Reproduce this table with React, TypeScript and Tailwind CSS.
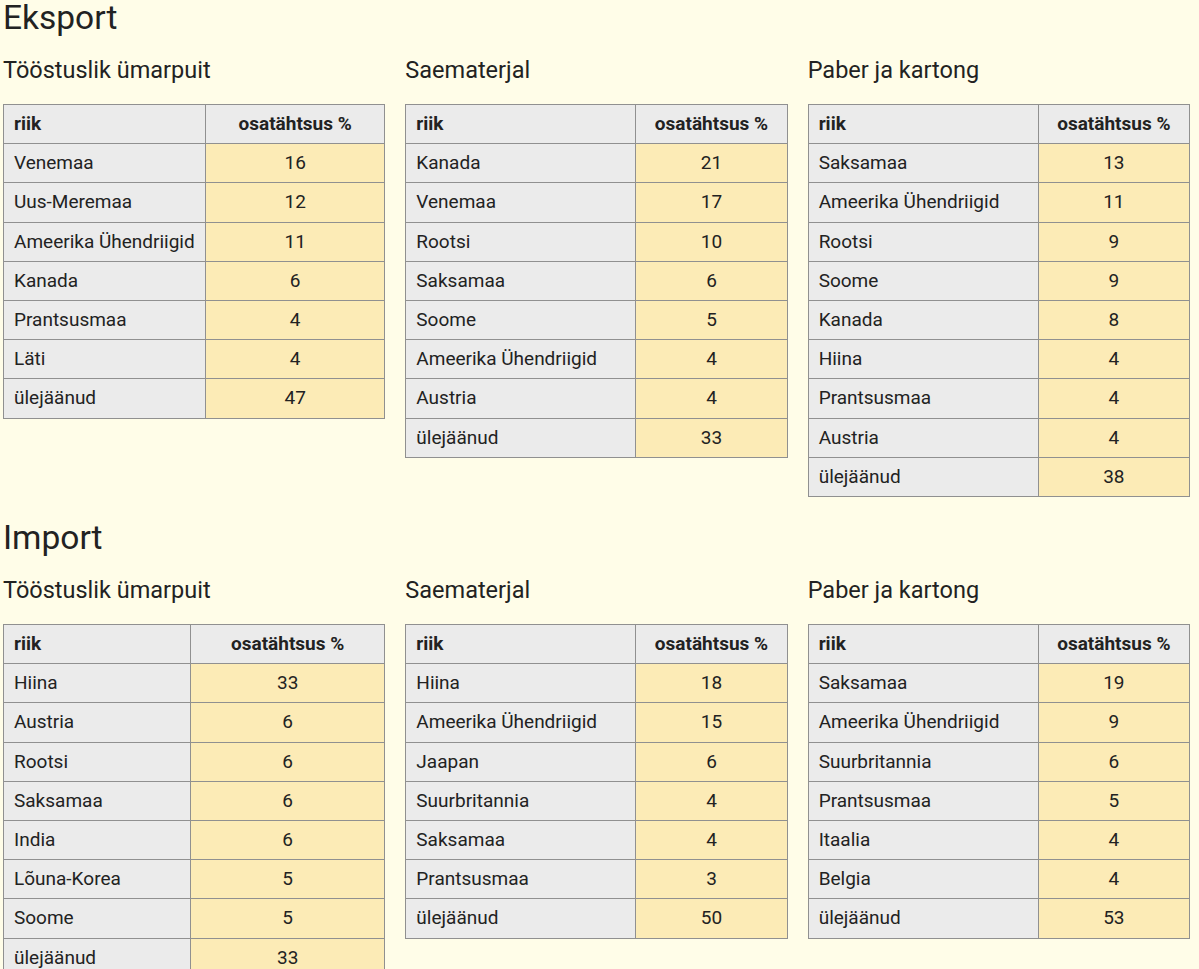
import React from "react";

type Row = [string, number];
type T = { title: string; first: number; rows: Row[] };

const eksport: T[] = [
  {
    title: "Tööstuslik ümarpuit",
    first: 202,
    rows: [
      ["Venemaa", 16],
      ["Uus-Meremaa", 12],
      ["Ameerika Ühendriigid", 11],
      ["Kanada", 6],
      ["Prantsusmaa", 4],
      ["Läti", 4],
      ["ülejäänud", 47],
    ],
  },
  {
    title: "Saematerjal",
    first: 230,
    rows: [
      ["Kanada", 21],
      ["Venemaa", 17],
      ["Rootsi", 10],
      ["Saksamaa", 6],
      ["Soome", 5],
      ["Ameerika Ühendriigid", 4],
      ["Austria", 4],
      ["ülejäänud", 33],
    ],
  },
  {
    title: "Paber ja kartong",
    first: 230,
    rows: [
      ["Saksamaa", 13],
      ["Ameerika Ühendriigid", 11],
      ["Rootsi", 9],
      ["Soome", 9],
      ["Kanada", 8],
      ["Hiina", 4],
      ["Prantsusmaa", 4],
      ["Austria", 4],
      ["ülejäänud", 38],
    ],
  },
];

const importData: T[] = [
  {
    title: "Tööstuslik ümarpuit",
    first: 187,
    rows: [
      ["Hiina", 33],
      ["Austria", 6],
      ["Rootsi", 6],
      ["Saksamaa", 6],
      ["India", 6],
      ["Lõuna-Korea", 5],
      ["Soome", 5],
      ["ülejäänud", 33],
    ],
  },
  {
    title: "Saematerjal",
    first: 230,
    rows: [
      ["Hiina", 18],
      ["Ameerika Ühendriigid", 15],
      ["Jaapan", 6],
      ["Suurbritannia", 4],
      ["Saksamaa", 4],
      ["Prantsusmaa", 3],
      ["ülejäänud", 50],
    ],
  },
  {
    title: "Paber ja kartong",
    first: 230,
    rows: [
      ["Saksamaa", 19],
      ["Ameerika Ühendriigid", 9],
      ["Suurbritannia", 6],
      ["Prantsusmaa", 5],
      ["Itaalia", 4],
      ["Belgia", 4],
      ["ülejäänud", 53],
    ],
  },
];

function Table({ t }: { t: T }) {
  return (
    <div>
      <h2 className="m-0 text-[23.5px] leading-[28px] font-normal text-[#222]">{t.title}</h2>
      <table className="mt-[20px] w-full border-collapse text-[19px] leading-[24.2px] text-[#222]">
        <colgroup>
          <col style={{ width: t.first }} />
          <col />
        </colgroup>
        <thead>
          <tr>
            <th className="border border-[#909090] bg-[#ebebeb] py-[7px] pl-[10px] text-left font-bold">riik</th>
            <th className="border border-[#909090] bg-[#ebebeb] py-[7px] text-center font-bold">osatähtsus %</th>
          </tr>
        </thead>
        <tbody>
          {t.rows.map(([c, v], i) => (
            <tr key={i}>
              <td className="border border-[#909090] bg-[#ebebeb] py-[7px] pl-[10px] text-left">{c}</td>
              <td className="border border-[#909090] bg-[#fcebb6] py-[7px] text-center">{v}</td>
            </tr>
          ))}
        </tbody>
      </table>
    </div>
  );
}

function Section({ title, data, className }: { title: string; data: T[]; className?: string }) {
  return (
    <section className={className}>
      <h1 className="m-0 text-[33.5px] leading-[36px] font-normal text-[#222]">{title}</h1>
      <div className="mt-[20px] grid grid-cols-3 items-start gap-x-[20px]">
        {data.map((t, i) => (
          <Table key={i} t={t} />
        ))}
      </div>
    </section>
  );
}

export default function App() {
  return (
    <div
      className="min-h-[969px] bg-[#fffde8] pl-[3px]"
      style={{ fontFamily: "Roboto, 'Noto Sans', sans-serif" }}
    >
      <div className="w-[1187px]">
        <Section title="Eksport" data={eksport} />
        <Section title="Import" data={importData} className="mt-[23px]" />
      </div>
    </div>
  );
}
